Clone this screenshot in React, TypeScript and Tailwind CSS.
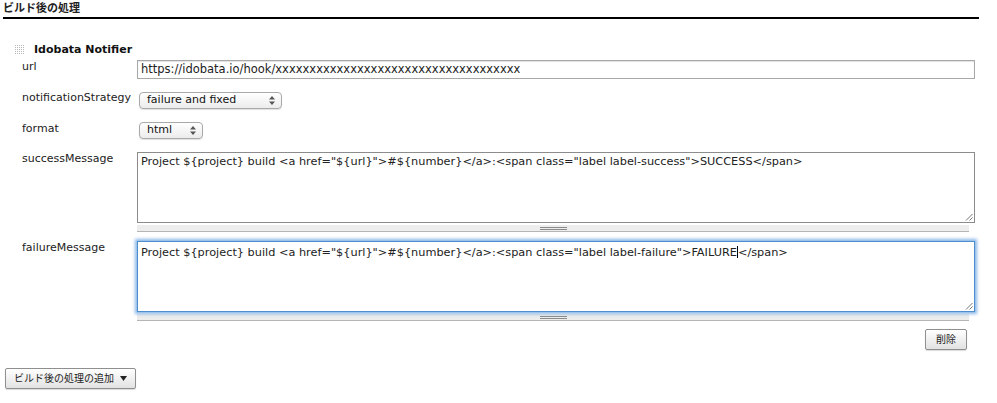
import type { ReactNode } from 'react'

const ui = { fontFamily: '"DejaVu Sans", Verdana, "Noto Sans CJK JP", sans-serif' }
const jp = { fontFamily: '"DejaVu Sans", "Noto Sans CJK JP", sans-serif' }

const successText =
  'Project ${project} build <a href="${url}">#${number}</a>:<span class="label label-success">SUCCESS</span>'
const failureHead =
  'Project ${project} build <a href="${url}">#${number}</a>:<span class="label label-failure">FAILURE'

function DragHandle() {
  const dots = []
  for (let y = 0; y < 5; y++) {
    for (let x = 0; x < 5; x++) {
      dots.push(<rect key={`${x}-${y}`} x={x * 2} y={y * 2} width="1" height="1" fill="#b8b8b8" />)
    }
  }
  return (
    <svg width="10" height="10" viewBox="0 0 10 10" className="shrink-0">
      {dots}
    </svg>
  )
}

function Updown() {
  return (
    <svg width="6" height="9" viewBox="0 0 6 9" className="shrink-0">
      <path d="M3 0 L6 3.5 L0 3.5 Z" fill="#555" />
      <path d="M0 5.5 L6 5.5 L3 9 Z" fill="#555" />
    </svg>
  )
}

// resize corner of a textarea
function ResizeCorner() {
  return (
    <svg width="8" height="8" viewBox="0 0 8 8" className="absolute right-[1px] bottom-[1px]">
      <path d="M7.5 1 L1 7.5 M7.5 4.5 L4.5 7.5" stroke="#777" strokeWidth="1" />
    </svg>
  )
}

function Select({ value, width }: { value: string; width: string }) {
  return (
    <div
      className={`flex h-[17px] ${width} items-center justify-between rounded-[4px] border border-[#a9a9a9] bg-gradient-to-b from-white to-[#ececec] pl-[7px] pr-[6px] text-[11px] text-[#111] shadow-[0_1px_1px_rgba(0,0,0,0.12)]`}
    >
      <span>{value}</span>
      <Updown />
    </div>
  )
}

function Grip() {
  return (
    <div className="flex h-[7px] w-[832px] items-center justify-center border-b border-[#b5b5b5] bg-[#ededed]">
      <div className="h-[3px] w-[27px] border-y border-[#8a8a8a]" />
    </div>
  )
}

function Row({ label, top, children }: { label: string; top: string; children: ReactNode }) {
  return (
    <div className={`flex ${top}`}>
      <div className="w-[115px] shrink-0 text-[11px] leading-[13px] text-[#222]">{label}</div>
      <div className="flex-1">{children}</div>
    </div>
  )
}

function GrayButton({ children, className }: { children: ReactNode; className: string }) {
  return (
    <button
      type="button"
      className={`flex items-center justify-center rounded-[2px] border border-[#8f8f8f] bg-gradient-to-b from-white to-[#e2e2e2] text-[10px] text-[#222] shadow-[0_1px_1px_rgba(0,0,0,0.15)] ${className}`}
      style={jp}
    >
      {children}
    </button>
  )
}

export default function App() {
  return (
    <div className="h-[403px] w-[997px] overflow-hidden bg-white text-[#222]" style={ui}>
      <div className="ml-[3px] h-[19px] w-[976px] border-b-2 border-black pt-[2px] text-[11px] font-bold leading-[13px]" style={jp}>
        ビルド後の処理
      </div>

      <div className="w-[975px] pl-[15px]">
        <div className="mt-[24px] flex items-center gap-[9px]">
          <DragHandle />
          <span className="text-[11px] font-bold leading-[13px] text-[#111]">Idobata Notifier</span>
        </div>

        <div className="pl-[7px]">
          <Row label="url" top="mt-[4px]">
            <div className="flex h-[19px] items-center border border-[#a8a8a8] bg-white px-[3px] text-[11.5px] shadow-[inset_0_1px_1px_rgba(0,0,0,0.12)]">
              https://idobata.io/hook/xxxxxxxxxxxxxxxxxxxxxxxxxxxxxxxxxxxx
            </div>
          </Row>

          <Row label="notificationStrategy" top="mt-[12px]">
            <div className="ml-[2px] pt-[1px]">
              <Select value="failure and fixed" width="w-[143px]" />
            </div>
          </Row>

          <Row label="format" top="mt-[13px]">
            <div className="ml-[2px]">
              <Select value="html" width="w-[64px]" />
            </div>
          </Row>

          <Row label="successMessage" top="mt-[13px]">
            <div className="relative h-[71px] border border-[#8c8c8c] bg-white px-[3px] pt-[2px] text-[11.3px] leading-[14px]">
              {successText}
              <ResizeCorner />
            </div>
            <div className="mt-[2px]">
              <Grip />
            </div>
          </Row>

          <Row label="failureMessage" top="mt-[9px]">
            <div className="relative h-[71px] border border-[#4f8fd0] bg-white px-[3px] pt-[2px] text-[11.3px] leading-[14px] shadow-[0_0_3px_2px_rgba(110,165,225,0.8)]">
              {failureHead}
              <span className="inline-block h-[12px] w-px translate-y-[2px] bg-black" />
              {'</span>'}
              <ResizeCorner />
            </div>
            <div className="mt-[2px]">
              <Grip />
            </div>
          </Row>

          <div className="mt-[8px] flex justify-end pr-[8px]">
            <GrayButton className="h-[21px] w-[42px]">削除</GrayButton>
          </div>
        </div>
      </div>

      <div className="mt-[18px] pl-[5px]">
        <GrayButton className="h-[21px] w-[131px] gap-[6px]">
          <span>ビルド後の処理の追加</span>
          <svg width="7" height="5" viewBox="0 0 7 5">
            <path d="M0 0 L7 0 L3.5 5 Z" fill="#222" />
          </svg>
        </GrayButton>
      </div>
    </div>
  )
}
